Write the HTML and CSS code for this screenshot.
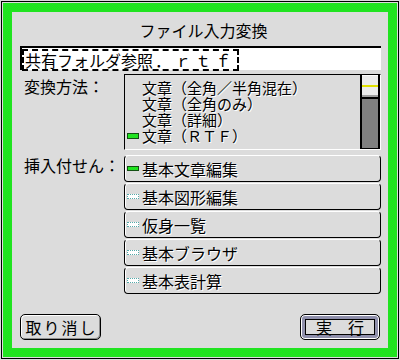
FILE: index.html
```html
<!DOCTYPE html>
<html>

<head>
    <meta charset="utf-8">
    <link rel="stylesheet" href="styles.css">
</head>

<body>
    <div class="screen">
        <div class="frame">
            <div class="green">
                <div class="dialog">
                    <div class="title">ファイル入力変換</div>

                    <div class="field">
                        <span class="sel">共有フォルダ参照<span class="ext">．ｒｔｆ</span></span>
                    </div>

                    <!-- 変換方法 -->
                    <div class="row">
                        <div class="label">変換方法：</div>
                        <div class="listbox">
                            <ul class="items">
                                <li><span class="pick"></span>文章（全角／半角混在）</li>
                                <li><span class="pick"></span>文章（全角のみ）</li>
                                <li><span class="pick"></span>文章（詳細）</li>
                                <li class="on"><span class="pick"></span>文章（ＲＴＦ）</li>
                            </ul>
                            <div class="scrollbar">
                                <div class="thumb"></div>
                            </div>
                        </div>
                    </div>

                    <!-- 挿入付せん -->
                    <div class="row">
                        <div class="label label-tabs">挿入付せん：</div>
                        <div class="tabs">
                            <div class="tab on"><span class="mark"></span>基本文章編集</div>
                            <div class="tab"><span class="mark"></span>基本図形編集</div>
                            <div class="tab"><span class="mark"></span>仮身一覧</div>
                            <div class="tab"><span class="mark"></span>基本ブラウザ</div>
                            <div class="tab"><span class="mark"></span>基本表計算</div>
                        </div>
                    </div>

                    <div class="actions">
                        <div class="btn cancel">取り消し</div>
                        <div class="btn default">実　行</div>
                    </div>
                </div>
            </div>
        </div>
    </div>
</body>

</html>
```

FILE: styles.css
```css
/* ダイアログ全体 */
body {
    margin: 0;
    background-color: #dcdcdc;
    font-family: "Noto Sans CJK JP", sans-serif;
    color: #000;
}

.screen {
    width: 400px;
    height: 360px;
    box-sizing: border-box;
    padding: 1px;
}

.frame {
    height: 100%;
    box-sizing: border-box;
    border: 1px solid #000;
    padding: 1px;
}

.green {
    height: 100%;
    box-sizing: border-box;
    padding: 9px;
    background: repeating-conic-gradient(#11ff11 0 25%, #30c830 0 50%) 0 0 / 2px 2px;
}

.dialog {
    height: 100%;
    box-sizing: border-box;
    background-color: #dcdcdc;
    padding: 8px 7px 8px 8px;
    display: flex;
    flex-direction: column;
}

.title {
    font-size: 16px;
    line-height: 20px;
    text-align: center;
    padding-left: 6px;
}

/* 入力欄 */
.field {
    margin-top: 6px;
    height: 24px;
    box-sizing: border-box;
    background-color: #fff;
    border-top: 2px solid #000;
    border-left: 2px solid #000;
    font-size: 16px;
}

.sel {
    display: inline-block;
    height: 22px;
    box-sizing: border-box;
    border: 2px dashed #000;
    line-height: 18px;
    padding: 0 2px 0 1px;
}

.ext {
    letter-spacing: 4px;
    margin-left: 2px;
}

.row {
    display: flex;
}

.label {
    width: 100px;
    padding-left: 4px;
    font-size: 16px;
    line-height: 18px;
    margin-top: 7px;
}

.label-tabs {
    margin-top: 6px;
}

/* リスト */
.listbox {
    flex: 1;
    margin-top: 4px;
    height: 76px;
    box-sizing: border-box;
    border-top: 1px solid #000;
    border-left: 1px solid #000;
    border-bottom: 1px solid #fff;
    border-right: 1px solid #fff;
    display: flex;
}

.items {
    flex: 1;
    list-style: none;
    margin: 0;
    padding: 5px 0 0 2px;
    font-size: 15px;
    line-height: 16px;
    text-shadow: 1px 1px 0 #fff;
}

.items li {
    display: flex;
    align-items: center;
}

.pick {
    width: 12px;
    height: 6px;
    margin-right: 3px;
    box-sizing: border-box;
}

.items li.on .pick {
    border: 1px solid #135013;
    background: repeating-conic-gradient(#11ff11 0 25%, #30c830 0 50%) 0 0 / 2px 2px;
}

.scrollbar {
    width: 16px;
    border-left: 2px solid #000;
    border-right: 2px solid #000;
    border-bottom: 1px solid #000;
    background-color: #808080;
}

.thumb {
    height: 21px;
    border-top: 1px solid #fff;
    border-bottom: 2px solid #000;
    background: linear-gradient(#ececec 0 9px, #e0e000 9px 11px, #ececec 11px 19px, #a0a0a0 19px);
}

/* 付せんボタン */
.tabs {
    flex: 1;
    margin-top: 5px;
    display: flex;
    flex-direction: column;
    gap: 1px;
}

.tab {
    height: 27px;
    box-sizing: border-box;
    border: 1px solid #000;
    border-top-color: #fff;
    border-radius: 4px;
    box-shadow: inset 1px 0 0 #fff;
    display: flex;
    align-items: center;
    font-size: 16px;
    line-height: 20px;
    text-shadow: 1px 1px 0 #fff;
}

.mark {
    width: 12px;
    height: 5px;
    margin: 0 3px 0 2px;
    box-sizing: border-box;
    border: 1px dotted #55aaaa;
    background-color: #fff;
}

.tab.on .mark {
    border: 1px solid #135013;
    background: repeating-conic-gradient(#11ff11 0 25%, #30c830 0 50%) 0 0 / 2px 2px;
}

/* 下のボタン */
.actions {
    margin-top: auto;
    display: flex;
    justify-content: space-between;
    padding-right: 1px;
}

.btn {
    height: 26px;
    box-sizing: border-box;
    border: 1px solid #000;
    border-radius: 5px;
    background-color: #dcdcdc;
    font-size: 16px;
    line-height: 24px;
    text-align: center;
}

.cancel {
    width: 81px;
    letter-spacing: 2px;
    padding-left: 2px;
    box-shadow: inset 1px 1px 0 #fff, inset -1px -1px 0 #909090;
}

.default {
    width: 80px;
    box-shadow: inset 0 0 0 1px #fff, inset 0 0 0 4px #9090ac, inset 0 0 0 5px #000;
}
```
